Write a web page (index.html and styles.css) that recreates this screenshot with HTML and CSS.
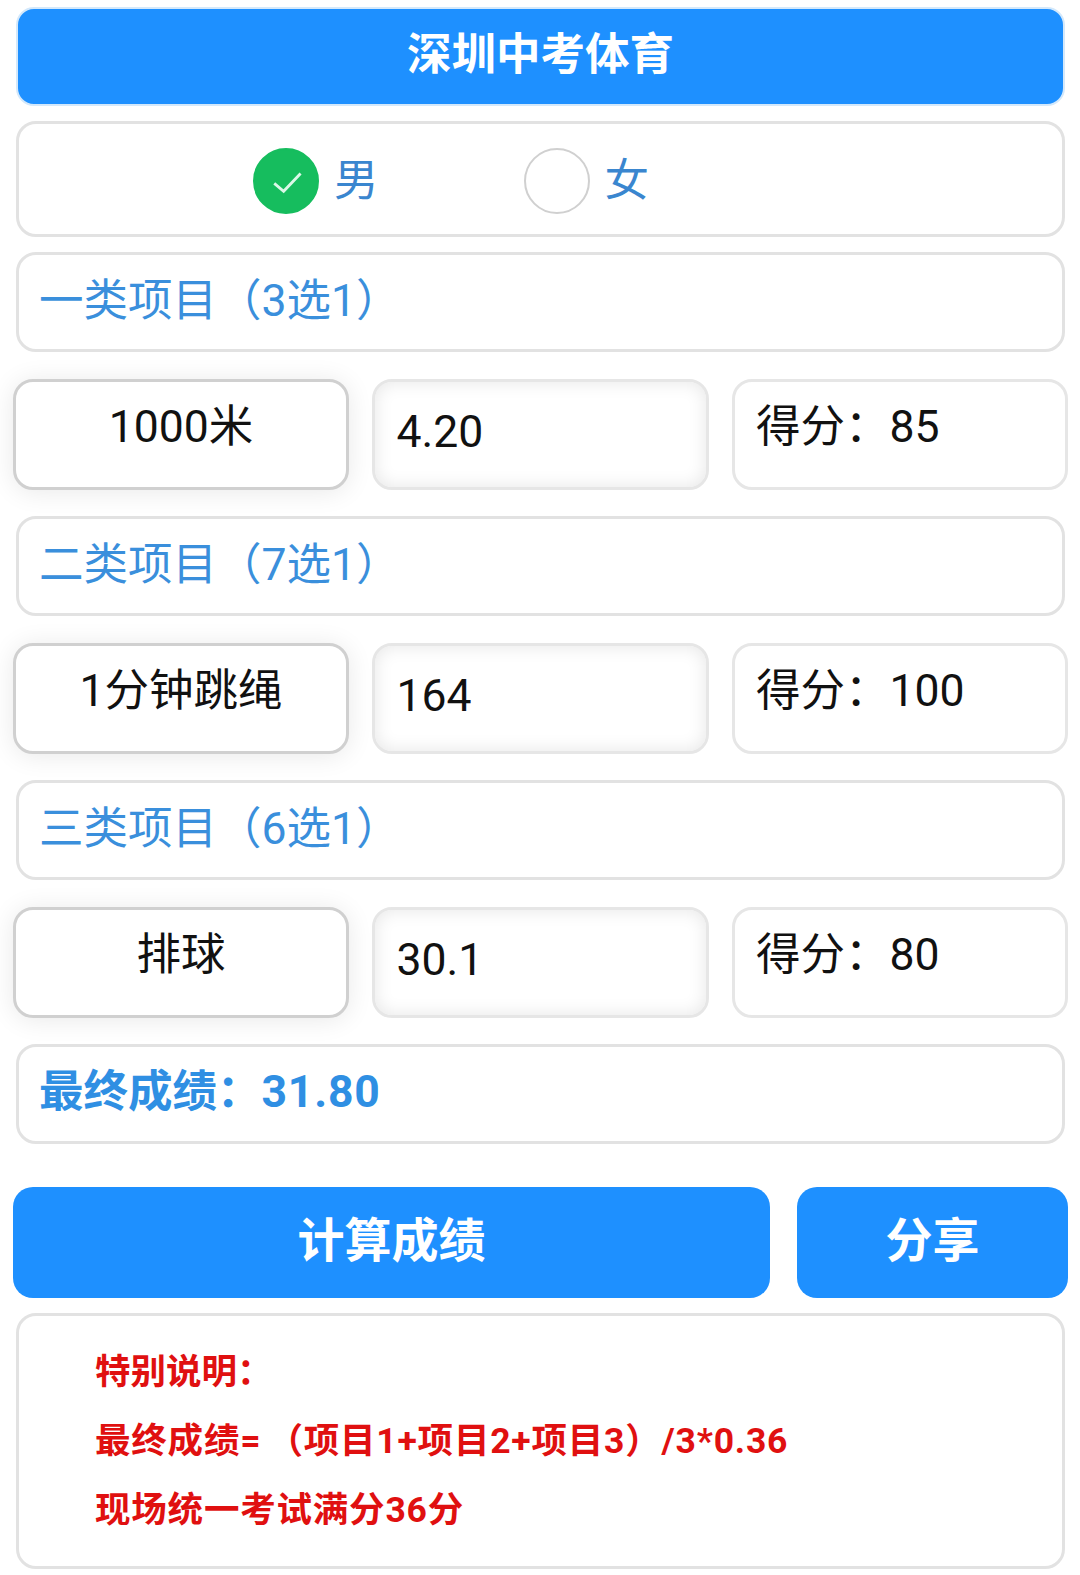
FILE: index.html
```html
<!DOCTYPE html>
<html lang="zh-CN">
<head>
    <meta charset="UTF-8">
    <meta name="viewport" content="width=device-width, initial-scale=1.0">
    <title>深圳中考体育</title>
    <link rel="stylesheet" href="styles.css">
</head>
<body>
    <div class="page">
        <div class="title">深圳中考体育</div>

        <div class="box gender">
            <label class="radio">
                <span class="dot checked">
                    <svg viewBox="0 0 66 66" width="66" height="66"><path d="M20.5 35.5 L30.5 44 L48.5 25" fill="none" stroke="#dcf8e8" stroke-width="3"/></svg>
                </span>
                <span>男</span>
            </label>
            <label class="radio">
                <span class="dot"></span>
                <span>女</span>
            </label>
        </div>

        <div class="box section">一类项目（3选1）</div>
        <div class="row">
            <div class="cell picker">1000米</div>
            <div class="cell input">4.20</div>
            <div class="cell score">得分：<span class="num">85</span></div>
        </div>

        <div class="box section">二类项目（7选1）</div>
        <div class="row">
            <div class="cell picker">1分钟跳绳</div>
            <div class="cell input">164</div>
            <div class="cell score">得分：<span class="num">100</span></div>
        </div>

        <div class="box section">三类项目（6选1）</div>
        <div class="row">
            <div class="cell picker">排球</div>
            <div class="cell input">30.1</div>
            <div class="cell score">得分：<span class="num">80</span></div>
        </div>

        <div class="box section final">最终成绩：<span class="num">31.80</span></div>

        <div class="actions">
            <button class="btn calc">计算成绩</button>
            <button class="btn share">分享</button>
        </div>

        <div class="box note">
            <p class="note-head">特别说明：</p>
            <p>最终成绩=<span class="formula">（项目1+项目2+项目3）/3*0.36</span></p>
            <p>现场统一考试满分36分</p>
        </div>
    </div>
</body>
</html>
```

FILE: styles.css
```css
* {
    box-sizing: border-box;
}

body {
    margin: 0;
    background-color: #fff;
    font-family: Roboto, "Noto Sans CJK SC", sans-serif;
    color: #111;
}

.page {
    height: 1575px;
    overflow: hidden;
    padding: 7px 12px 0 13px;
}

.title {
    height: 99px;
    margin: 0 3px 15px 3px;
    background-color: #1e90ff;
    border: 2px solid #d3e8fb;
    border-radius: 18px;
    color: #fff;
    font-size: 44.5px;
    font-weight: bold;
    line-height: 92px;
    text-align: center;
}

.box {
    margin: 0 3px;
    background-color: #fff;
    border: 3px solid #e2e2e2;
    border-radius: 20px;
}

.gender {
    height: 116px;
    margin-bottom: 15px;
    display: flex;
    padding: 4px 0 0 234px;
    gap: 145px;
    align-items: center;
    color: #3a86cf;
    font-size: 44.5px;
}

.radio {
    display: flex;
    align-items: center;
    gap: 15px;
    line-height: 1;
}

.dot {
    width: 66px;
    height: 66px;
    border: 2px solid #d0d0d0;
    border-radius: 50%;
    display: flex;
    align-items: center;
    justify-content: center;
}

.dot.checked {
    background-color: #16bd5e;
    border-color: #16bd5e;
}

.section {
    height: 100px;
    padding-left: 20px;
    color: #3a8fdc;
    font-size: 44.5px;
    line-height: 92px;
}

.row {
    display: flex;
    gap: 23.5px;
    margin: 26.5px 0;
}

.cell {
    width: 336.5px;
    height: 111px;
    background-color: #fff;
    border: 3px solid #e6e6e6;
    border-radius: 20px;
    font-size: 44.5px;
    line-height: 90px;
    white-space: nowrap;
}

.picker {
    border-color: #d0d0d0;
    text-align: center;
    box-shadow: 0 2px 26px rgba(0, 0, 0, 0.09);
}

.input {
    padding-left: 21px;
    line-height: 100px;
    box-shadow: inset 0 0 18px rgba(0, 0, 0, 0.1);
}

.score {
    padding-left: 21px;
}

.final {
    margin-bottom: 43px;
    color: #2f8fe3;
    font-weight: bold;
    line-height: 90px;
}

.final .num {
    letter-spacing: 0.8px;
}

.actions {
    display: flex;
    gap: 27px;
    margin-bottom: 15px;
}

.btn {
    height: 111px;
    background-color: #1e90ff;
    border: none;
    border-radius: 20px;
    color: #fff;
    font-family: inherit;
    font-size: 47px;
    font-weight: bold;
    padding: 0 0 12px;
}

.calc {
    flex: 1;
}

.share {
    width: 271px;
}

.note {
    height: 256px;
    padding: 22px 0 0 76px;
    color: #e01010;
    font-size: 35.5px;
    font-weight: bold;
    letter-spacing: 0.8px;
}

.note p {
    margin: 0;
    height: 69px;
    line-height: 69px;
    white-space: nowrap;
}

.note .note-head {
    letter-spacing: 0;
}

.formula {
    margin-left: 6px;
}
```
